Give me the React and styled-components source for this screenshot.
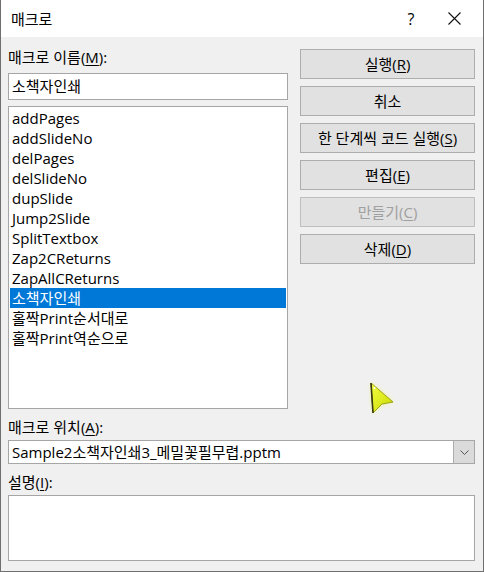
import React from "react";
import styled, { createGlobalStyle } from "styled-components";

const Global = createGlobalStyle`
  html, body {
    margin: 0;
    padding: 0;
    background: #f0f0f0;
  }
  * { box-sizing: border-box; }
`;

const Window = styled.div`
  position: relative;
  width: 484px;
  height: 572px;
  background: #f0f0f0;
  border: 1px solid #6f6f6f;
  border-top: none;
  font-family: "Open Sans", "Noto Sans CJK KR", sans-serif;
  font-size: 15px;
  color: #000;
  display: flex;
  flex-direction: column;
`;

const TitleBar = styled.div`
  height: 37px;
  background: #fff;
  display: flex;
  align-items: center;
  padding-left: 10px;
  flex-shrink: 0;
`;

const Title = styled.div`
  flex: 1;
  line-height: 20px;
`;

const TitleButton = styled.div`
  width: ${(p) => p.$w}px;
  height: 37px;
  display: flex;
  align-items: center;
  justify-content: center;
  font-size: 16px;
`;

const Body = styled.div`
  flex: 1;
  padding: 10px 8px 10px 7px;
  display: flex;
  flex-direction: column;
`;

const Top = styled.div`
  display: grid;
  grid-template-columns: 280px 175px;
  column-gap: 12px;
`;

const Column = styled.div`
  display: flex;
  flex-direction: column;
`;

const Label = styled.div`
  height: 20px;
  line-height: 20px;
  margin-top: ${(p) => p.$mt || 0}px;
`;

const U = styled.span`
  text-decoration: underline;
  text-underline-offset: 2px;
`;

const TextBox = styled.div`
  height: ${(p) => p.$h}px;
  margin-top: ${(p) => p.$mt || 0}px;
  background: #fff;
  border: 1px solid #a6a6a6;
  padding: 0 3px;
  line-height: 25px;
`;

const ListBox = styled.div`
  height: 303px;
  margin-top: 6px;
  background: #fff;
  border: 1px solid #a6a6a6;
  padding: 1px;
`;

const Item = styled.div`
  height: 20px;
  line-height: 20px;
  padding-left: 2px;
  white-space: nowrap;
  background: ${(p) => (p.$selected ? "#0078d7" : "transparent")};
  color: ${(p) => (p.$selected ? "#fff" : "#000")};
`;

const Buttons = styled.div`
  display: flex;
  flex-direction: column;
  gap: 7px;
  margin-top: 2px;
`;

const Button = styled.div`
  height: 30px;
  background: #e1e1e1;
  border: 1px solid ${(p) => (p.$disabled ? "#bfbfbf" : "#adadad")};
  color: ${(p) => (p.$disabled ? "#a0a0a0" : "#000")};
  display: flex;
  align-items: center;
  justify-content: center;
  line-height: 20px;
`;

const Select = styled.div`
  height: 24px;
  margin-top: 3px;
  background: #fff;
  border: 1px solid #a6a6a6;
  display: flex;
`;

const SelectText = styled.div`
  flex: 1;
  padding-left: 3px;
  line-height: 22px;
  white-space: nowrap;
`;

const SelectArrow = styled.div`
  width: 21px;
  background: #dadada;
  border-left: 1px solid #adadad;
  display: flex;
  align-items: center;
  justify-content: center;
`;

const Cursor = styled.svg`
  position: absolute;
  left: 362px;
  top: 375px;
`;

const macros = [
  "addPages",
  "addSlideNo",
  "delPages",
  "delSlideNo",
  "dupSlide",
  "Jump2Slide",
  "SplitTextbox",
  "Zap2CReturns",
  "ZapAllCReturns",
  "소책자인쇄",
  "홀짝Print순서대로",
  "홀짝Print역순으로",
];

export default function App() {
  return (
    <>
      <Global />
      <Window>
        <TitleBar>
          <Title>매크로</Title>
          <TitleButton $w={28}>?</TitleButton>
          <TitleButton $w={58}>
            <svg width="13" height="13" viewBox="0 0 13 13">
              <path d="M0.5 0.5 L12.5 12.5 M12.5 0.5 L0.5 12.5" stroke="#111" strokeWidth="1.1" />
            </svg>
          </TitleButton>
        </TitleBar>
        <Body>
          <Top>
            <Column>
              <Label>
                매크로 이름(<U>M</U>):
              </Label>
              <TextBox $h={27} $mt={6}>소책자인쇄</TextBox>
              <ListBox>
                {macros.map((m, i) => (
                  <Item key={m} $selected={i === 9}>
                    {m}
                  </Item>
                ))}
              </ListBox>
            </Column>
            <Buttons>
              <Button>
                실행(<U>R</U>)
              </Button>
              <Button>취소</Button>
              <Button>
                한 단계씩 코드 실행(<U>S</U>)
              </Button>
              <Button>
                편집(<U>E</U>)
              </Button>
              <Button $disabled>
                만들기(<U>C</U>)
              </Button>
              <Button>
                삭제(<U>D</U>)
              </Button>
            </Buttons>
          </Top>
          <Label $mt={8}>
            매크로 위치(<U>A</U>):
          </Label>
          <Select>
            <SelectText>Sample2소책자인쇄3_메밀꽃필무렵.pptm</SelectText>
            <SelectArrow>
              <svg width="9" height="5" viewBox="0 0 9 5">
                <path d="M0.5 0.5 L4.5 4.5 L8.5 0.5" fill="none" stroke="#555" strokeWidth="1" />
              </svg>
            </SelectArrow>
          </Select>
          <Label $mt={8}>
            설명(<U>I</U>):
          </Label>
          <TextBox $h={66} $mt={3} />
        </Body>
        <Cursor width="40" height="48" viewBox="0 0 40 48">
          <defs>
            <filter id="glow" x="-50%" y="-50%" width="200%" height="200%">
              <feGaussianBlur stdDeviation="2" />
            </filter>
            <linearGradient id="fill" x1="0" y1="0" x2="1" y2="1">
              <stop offset="0" stopColor="#f4ff40" />
              <stop offset="1" stopColor="#c8d800" />
            </linearGradient>
          </defs>
          <polygon points="8,8 30,27 19,29 10,38" fill="#eef55a" opacity="0.7" filter="url(#glow)" />
          <polygon points="8,8 30,27 19,29 10,38" fill="url(#fill)" stroke="#8a8f00" strokeWidth="0.8" />
          <path d="M8 8 L10 38" stroke="#3a3a10" strokeWidth="1.6" />
          <circle cx="11.5" cy="13" r="1" fill="#fff" />
        </Cursor>
      </Window>
    </>
  );
}
